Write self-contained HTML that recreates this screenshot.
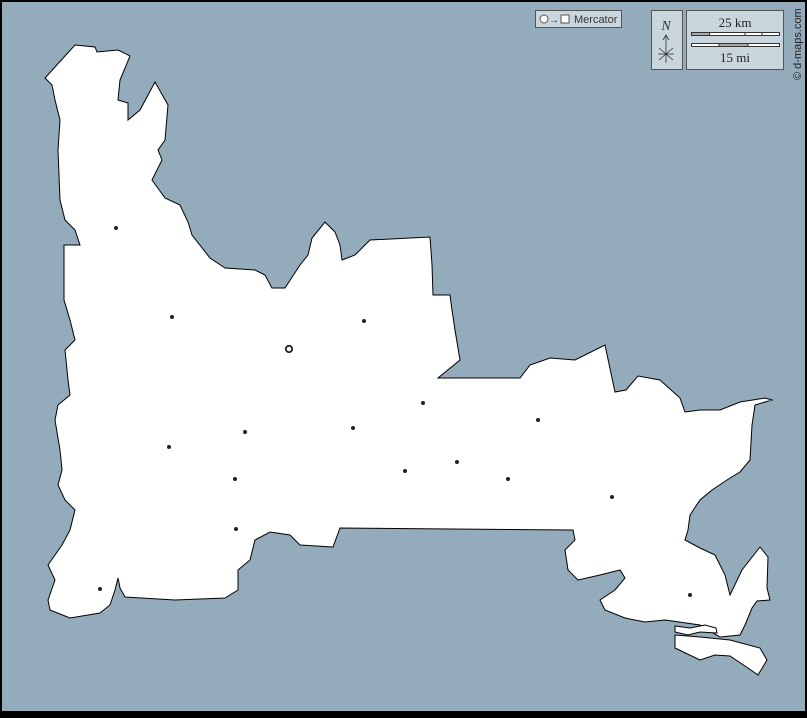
<!DOCTYPE html>
<html><head><style>
html,body{margin:0;padding:0}
body{width:807px;height:713px;overflow:hidden;background:#000}
</style></head><body>
<svg width="807" height="713" viewBox="0 0 807 713" xmlns="http://www.w3.org/2000/svg">
<rect x="0" y="0" width="807" height="713" fill="#000"/>
<rect x="2" y="2" width="803" height="709" fill="#94abbb"/>
<g fill="#fff" stroke="#000" stroke-width="1">
<polygon points="75,45 95,47 97,52 118,50 130,56 120,80 118,100 128,103 128,120 140,110 155,82 168,105 165,140 158,150 162,160 152,180 165,198 180,205 188,222 192,235 210,258 225,268 255,270 265,275 272,288 285,288 300,265 308,255 312,238 325,222 335,232 340,245 342,260 355,255 370,240 430,237 432,265 433,295 450,295 452,310 455,330 460,360 438,378 520,378 530,365 550,358 575,360 605,345 615,392 626,390 638,376 660,380 680,398 685,412 700,410 720,410 740,402 765,398 772,400 755,405 752,425 750,460 740,472 730,478 712,490 700,500 690,515 688,530 685,540 700,548 715,555 725,575 730,595 742,570 760,547 768,557 767,588 770,600 757,601 752,608 745,625 740,635 720,637 700,625 665,620 645,622 625,618 605,610 600,600 615,590 625,578 620,570 600,575 578,580 568,570 565,550 575,540 573,530 340,528 333,547 300,545 290,535 270,532 255,540 250,560 238,570 238,590 225,598 175,600 125,597 120,588 118,578 115,590 110,605 100,613 70,618 50,610 48,600 55,580 48,565 62,545 70,530 75,510 65,500 58,485 62,470 60,450 55,420 58,405 70,395 68,380 65,350 75,340 70,320 64,300 64,245 80,245 75,230 65,220 60,200 58,150 60,120 55,100 52,85 45,78"/>
<polygon points="675,626 690,628 705,625 716,628 717,633 700,632 688,635 675,632"/>
<polygon points="675,635 700,637 730,640 760,648 767,660 758,675 748,668 730,656 715,655 700,660 675,648"/>
</g>
<g fill="#222">
<circle cx="116" cy="228" r="2"/><circle cx="172" cy="317" r="2"/><circle cx="364" cy="321" r="2"/>
<circle cx="169" cy="447" r="2"/><circle cx="245" cy="432" r="2"/><circle cx="353" cy="428" r="2"/>
<circle cx="423" cy="403" r="2"/><circle cx="538" cy="420" r="2"/><circle cx="235" cy="479" r="2"/>
<circle cx="405" cy="471" r="2"/><circle cx="457" cy="462" r="2"/><circle cx="508" cy="479" r="2"/>
<circle cx="236" cy="529" r="2"/><circle cx="612" cy="497" r="2"/><circle cx="100" cy="589" r="2"/>
<circle cx="690" cy="595" r="2"/>
</g>
<circle cx="289" cy="349" r="3.2" fill="none" stroke="#222" stroke-width="1.8"/>
<rect x="535.5" y="10.5" width="86" height="17" fill="#c9d6de" stroke="#555"/>
<circle cx="544" cy="19" r="4" fill="#fff" stroke="#555"/>
<text x="549" y="23" font-family="Liberation Sans" font-size="10" fill="#333">→</text>
<rect x="561" y="15" width="8" height="8" fill="#fff" stroke="#555"/>
<text x="574" y="23" font-family="Liberation Sans" font-size="11" fill="#333">Mercator</text>
<rect x="651.5" y="10.5" width="31" height="59" fill="#c9d6de" stroke="#555"/>
<text x="666" y="30" text-anchor="middle" font-family="Liberation Serif" font-style="italic" font-size="14" fill="#333">N</text>
<path d="M666,35 V63 M663,40 L666,35 L669,40 M659,48 L673,60 M673,48 L659,60 M658,54 H674" stroke="#333" fill="none" stroke-width="0.8"/>
<rect x="686.5" y="10.5" width="97" height="59" fill="#c9d6de" stroke="#555"/>
<text x="735" y="27" text-anchor="middle" font-family="Liberation Serif" font-size="13" fill="#222">25 km</text>
<rect x="691.5" y="32.5" width="88" height="3" fill="#fff" stroke="#333"/>
<rect x="691.5" y="32.5" width="18" height="3" fill="#aaa" stroke="#333"/>
<rect x="745" y="32.5" width="17" height="3" fill="#fff" stroke="#333"/>
<rect x="691.5" y="43.5" width="88" height="3" fill="#fff" stroke="#333"/>
<rect x="719" y="43.5" width="29" height="3" fill="#aaa" stroke="#333"/>
<text x="735" y="62" text-anchor="middle" font-family="Liberation Serif" font-size="13" fill="#222">15 mi</text>
<text transform="translate(801,80) rotate(-90)" font-family="Liberation Sans" font-size="11" fill="#222">© d-maps.com</text>
</svg>
</body></html>
